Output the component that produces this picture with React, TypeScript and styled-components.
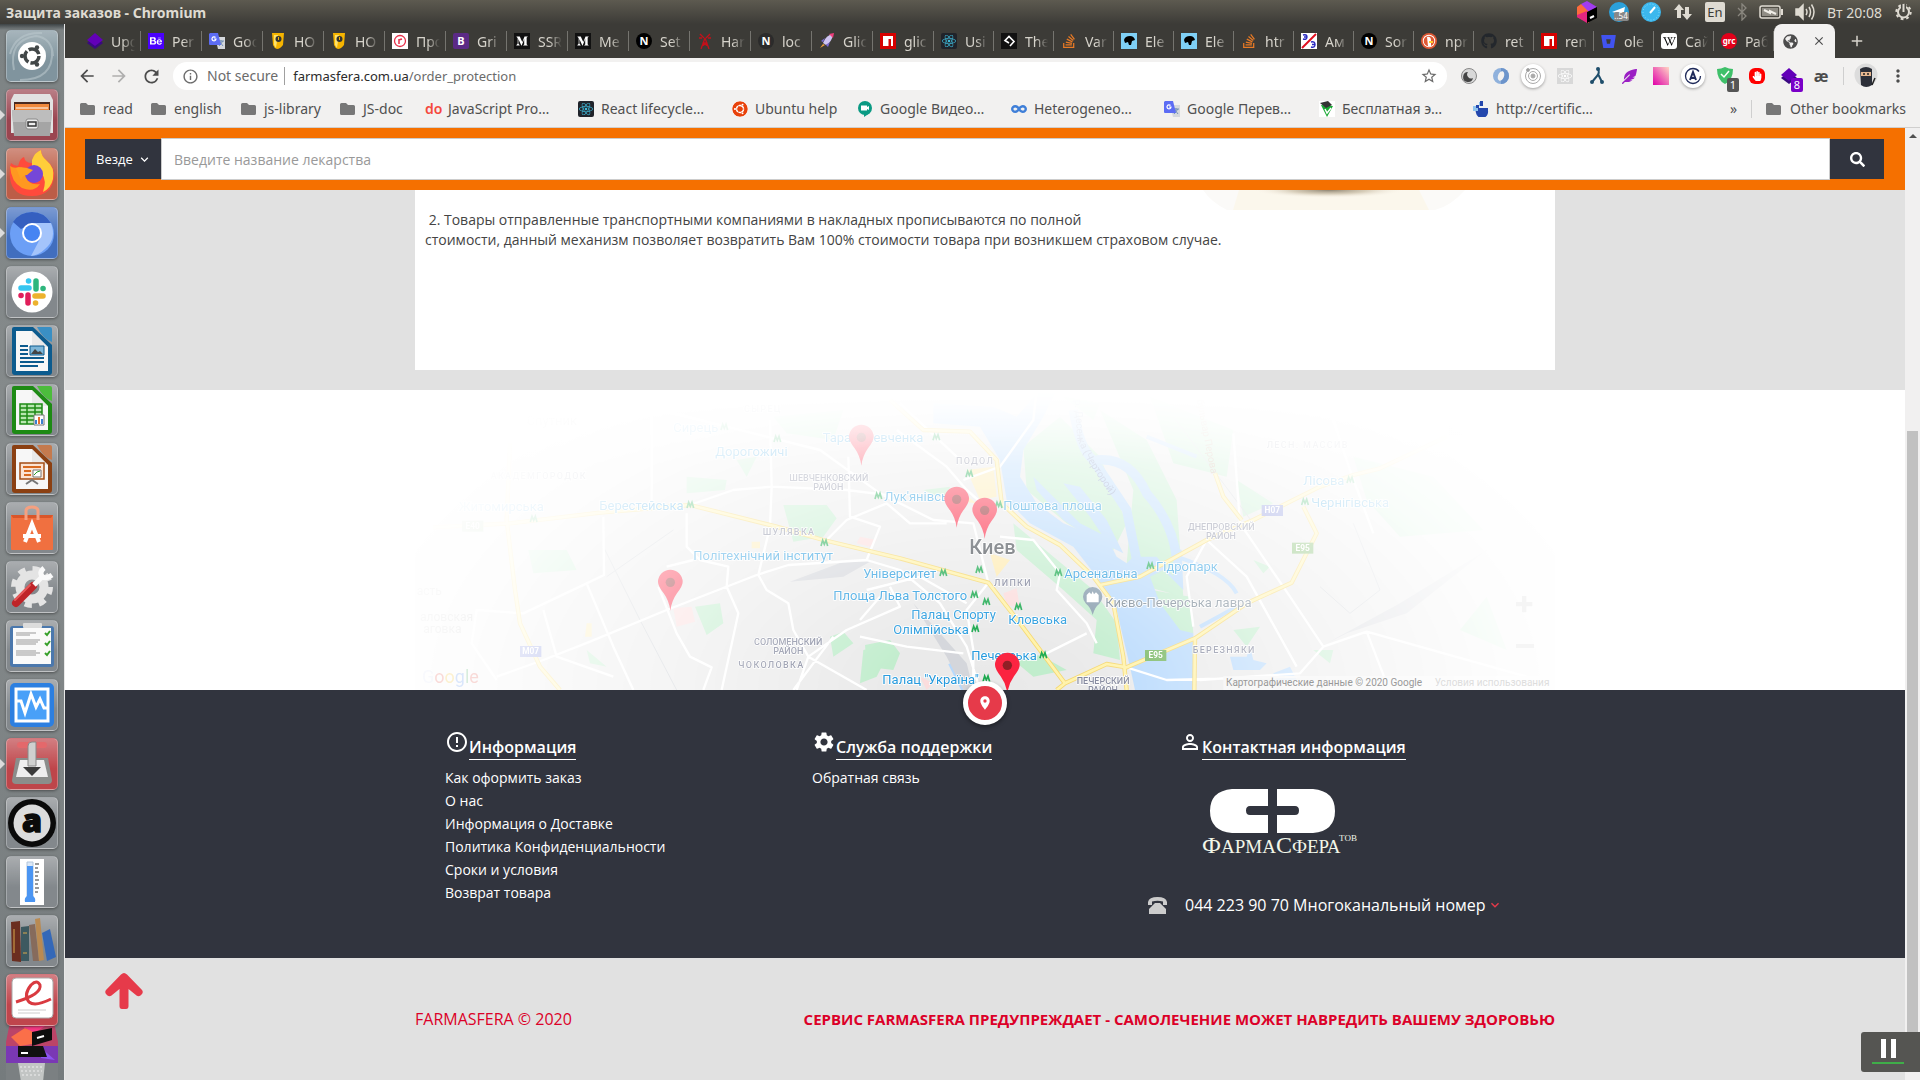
import React from 'react';
import styled, { createGlobalStyle } from 'styled-components';
import {
  FaBehance, FaBitbucket, FaBluetoothB, FaGithub, FaGlobeAmericas, FaMediumM, FaReact,
  FaStackOverflow, FaUbuntu, FaWikipediaW, FaHandPaper, FaFeatherAlt, FaSearch, FaInfinity,
} from 'react-icons/fa';
import {
  MdArrowBack, MdArrowForward, MdRefresh, MdStarBorder, MdInfoOutline, MdMoreVert, MdErrorOutline,
  MdSettings, MdPersonOutline, MdKeyboardArrowDown, MdClose, MdAdd, MdPlace,
} from 'react-icons/md';

const ui = '"Noto Sans", "Open Sans", sans-serif';
const site = '"Open Sans", "Noto Sans", sans-serif';
const dark = '#31343e';
const red = '#e63a4a';

const Global = createGlobalStyle`
  * { box-sizing: border-box; }
  html, body { margin: 0; height: 100%; overflow: hidden; }
  #root { height: 100%; }
  button { border: 0; padding: 0; background: none; font: inherit; color: inherit; cursor: pointer; }
  a { color: inherit; text-decoration: none; }
  svg { display: block; flex: none; }
`;

const Desktop = styled.div`
  display: grid;
  grid-template: 24px minmax(0, 1fr) / 65px minmax(0, 1fr);
  height: 100vh;
  font-family: ${ui};
`;

/* ---------- top panel ---------- */
const Panel = styled.header`
  grid-column: 1 / -1;
  display: flex;
  align-items: center;
  justify-content: space-between;
  padding: 0 8px 0 6px;
  background: linear-gradient(#5d5a50, #3c3b37);
  color: #dfdbd2;
  font-size: 14px;
`;
const WindowTitle = styled.strong`
  font-size: 14px;
`;
const Indicators = styled.div`
  display: flex;
  align-items: center;
  gap: 12px;
  white-space: nowrap;
`;
const Layout = styled.span`
  width: 20px;
  height: 20px;
  border-radius: 2px;
  background: #dfdbd2;
  color: #3c3b37;
  font-size: 13px;
  line-height: 20px;
  text-align: center;
`;
const Clock = styled.time`
  width: 56px;
  font-size: 14px;
`;

/* ---------- launcher ---------- */
const Launcher = styled.nav`
  display: flex;
  flex-direction: column;
  gap: 7px;
  min-height: 0;
  padding: 6px 5px 0 6px;
  overflow: hidden;
  border-right: 1px solid #e8e8e8;
  background: linear-gradient(#3d4345 0, #7d8384 6px, #868b8c 40%, #757b7d 100%);
`;
const Tile = styled.button<{ $bg?: string; $mark?: boolean }>`
  position: relative;
  flex: none;
  width: 52px;
  height: 52px;
  border: 1px solid rgba(255, 255, 255, 0.28);
  border-radius: 5px;
  background: linear-gradient(rgba(255, 255, 255, 0.32), rgba(255, 255, 255, 0.02) 60%), ${p => p.$bg || '#81868a'};
  box-shadow: 0 1px 3px rgba(0, 0, 0, 0.4);
  &::before {
    content: '';
    display: ${p => (p.$mark ? 'block' : 'none')};
    position: absolute;
    left: -7px;
    top: 20px;
    border: 5px solid transparent;
    border-left-color: #dcdcdc;
    border-right-width: 0;
  }
  svg { margin: -1px; }
`;
const Stack = styled.div`
  display: flex;
  flex-direction: column;
  margin-top: -13px;
`;

/* ---------- browser ---------- */
const Browser = styled.div`
  display: flex;
  flex-direction: column;
  min-width: 0;
  min-height: 0;
`;
const TabStrip = styled.div`
  display: flex;
  flex: none;
  height: 34px;
  padding-left: 15px;
  background: #3c3b37;
  color: #d6d3cb;
`;
const TabButton = styled.button`
  display: flex;
  align-items: center;
  gap: 8px;
  flex: 0 1 60px;
  min-width: 0;
  padding: 0 5px 0 7px;
  text-align: left;
  background: linear-gradient(#75746f, #75746f) right center / 1px 20px no-repeat;
  &:nth-child(-n + 14) { flex-basis: 61px; }
`;
const TabText = styled.span`
  flex: 1;
  overflow: hidden;
  white-space: nowrap;
  font-size: 14px;
  mask-image: linear-gradient(90deg, #000 45%, transparent 96%);
`;
const ActiveTab = styled.div`
  display: flex;
  align-items: center;
  justify-content: space-between;
  flex: 0 0 61px;
  padding: 0 9px;
  border-radius: 8px 8px 0 0;
  background: #f2f1f0;
  color: #4c4c4c;
`;
const NewTab = styled.button`
  display: grid;
  place-items: center;
  width: 44px;
`;
const Toolbar = styled.div`
  display: flex;
  align-items: center;
  flex: none;
  height: 36px;
  padding: 0 6px;
  background: #f2f1f0;
  color: #4c4c4c;
`;
const ToolButton = styled.button<{ $dim?: boolean }>`
  display: grid;
  place-items: center;
  flex: none;
  position: relative;
  width: 32px;
  height: 32px;
  opacity: ${p => (p.$dim ? 0.4 : 1)};
`;
const Omnibox = styled.div`
  display: flex;
  align-items: center;
  flex: 1;
  height: 28px;
  margin: 0 6px;
  padding: 0 9px;
  border-radius: 14px;
  background: #fff;
  color: #6b6b6b;
  font-size: 14px;
`;
const Security = styled.span`
  margin-left: 8px;
  padding-right: 6px;
  border-right: 1px solid #a0a0a0;
  line-height: 18px;
  white-space: nowrap;
`;
const Address = styled.div`
  flex: 1;
  margin-left: 8px;
  font-size: 13px;
  b { font-weight: 400; color: #2b2b2b; }
`;
const Disc = styled.span`
  display: grid;
  place-items: center;
  width: 24px;
  height: 24px;
  border-radius: 50%;
  background: #fff;
  box-shadow: 0 1px 3px rgba(0, 0, 0, 0.35);
`;
const Count = styled.span<{ $bg: string }>`
  position: absolute;
  right: 2px;
  bottom: 0;
  width: 12px;
  height: 14px;
  border-radius: 2px;
  background: ${p => p.$bg};
  color: #fff;
  font-size: 11px;
  line-height: 14px;
  text-align: center;
`;
const Divider = styled.i`
  flex: none;
  width: 1px;
  height: 18px;
  margin: 0 6px;
  background: #cfcfcf;
`;
const BookmarkBar = styled.nav`
  display: flex;
  align-items: center;
  flex: none;
  height: 34px;
  padding: 0 14px 4px 15px;
  border-bottom: 1px solid #d0cfce;
  background: #f2f1f0;
  color: #505050;
  font-size: 14px;
`;
const Bookmark = styled.a<{ $w: number }>`
  display: flex;
  align-items: center;
  gap: 7px;
  flex: 0 1 ${p => p.$w}px;
  white-space: nowrap;
`;
const OtherBookmarks = styled.div`
  display: flex;
  align-items: center;
  gap: 8px;
  margin-left: auto;
  white-space: nowrap;
`;
const DoMark = styled.span`
  width: 16px;
  color: #f5483d;
  font-size: 14px;
  font-weight: 600;
`;
const Glyph = styled.span<{ $bg: string; $fg?: string; $round?: number }>`
  display: grid;
  place-items: center;
  flex: none;
  width: 16px;
  height: 16px;
  overflow: hidden;
  border-radius: ${p => p.$round || 0}px;
  background: ${p => p.$bg};
  color: ${p => p.$fg || '#fff'};
  font-size: 11px;
  font-weight: 700;
  line-height: 16px;
`;

/* ---------- web page ---------- */
const Viewport = styled.div`
  display: flex;
  flex: 1;
  min-height: 0;
`;
const Page = styled.div`
  display: flex;
  flex-direction: column;
  flex: 1;
  min-width: 0;
  overflow: hidden;
  background: #e1e1e1;
  font-family: ${site};
`;
const Scrollbar = styled.div`
  display: flex;
  flex-direction: column;
  align-items: center;
  flex: 0 0 15px;
  padding-top: 6px;
  background: #f1f0f0;
`;
const Caret = styled.i<{ $down?: boolean }>`
  border: 4px solid transparent;
  border-top-width: 0;
  border-bottom-color: #505050;
`;
const Thumb = styled.i`
  width: 11px;
  height: 67%;
  margin: auto 0 15px;
  background: #c1c1c1;
`;
const SearchBar = styled.form`
  display: flex;
  align-items: center;
  flex: none;
  padding: 10px 21px 10px 20px;
  background: #f57000;
`;
const Scope = styled.button`
  display: flex;
  align-items: center;
  justify-content: center;
  gap: 4px;
  width: 76px;
  height: 40px;
  padding-left: 2px;
  background: ${dark};
  color: #fff;
  font-size: 13px;
`;
const SearchInput = styled.input`
  flex: 1;
  min-width: 0;
  height: 42px;
  padding: 0 12px;
  border: 1px solid #ccc;
  background: #fff;
  color: #333;
  font: 14px ${site};
  &::placeholder { color: #999; opacity: 1; }
`;
const SearchButton = styled.button`
  display: grid;
  place-items: center;
  width: 54px;
  height: 40px;
  background: ${dark};
  color: #fff;
`;
const Main = styled.main`
  flex: none;
  padding-bottom: 20px;
`;
const Wrap = styled.div`
  width: 100%;
  max-width: 1140px;
  margin: 0 auto;
`;
const Card = styled(Wrap)`
  padding: 0 10px 120px;
  background: #fff;
`;
const Photo = styled.div`
  display: flex;
  justify-content: flex-end;
  height: 20px;
  padding-right: 80px;
`;
const Paragraph = styled.p`
  margin: 0;
  color: #444;
  font-size: 14px;
  line-height: 20px;
`;
const MapBand = styled.section`
  position: relative;
  display: flex;
  justify-content: center;
  flex: none;
  height: 300px;
  background: #fff;
`;
const MapToggle = styled.button`
  position: absolute;
  left: 50%;
  bottom: -35px;
  display: grid;
  place-items: center;
  width: 44px;
  height: 44px;
  transform: translateX(-50%);
  border: 5px solid #fff;
  border-radius: 50%;
  background: ${red};
  color: #fff;
  box-shadow: 0 2px 4px rgba(0, 0, 0, 0.4);
`;
const Footer = styled.footer`
  flex: none;
  background: ${dark};
  color: #fff;
`;
const FooterGrid = styled(Wrap)`
  display: grid;
  grid-template-columns: 367fr 336fr 407fr;
  padding: 38px 0 41px 30px;
`;
const Heading = styled.h3<{ $inset?: boolean }>`
  display: flex;
  align-items: flex-start;
  margin: 0;
  padding-left: ${p => (p.$inset ? 30 : 0)}px;
  font-size: 16px;
  font-weight: 600;
  line-height: 23px;
  white-space: nowrap;
  svg { margin-top: 2px; }
  span { margin-top: 8px; border-bottom: 1px solid #fff; }
`;
const LinkList = styled.ul`
  margin: 6px 0 0;
  padding: 0;
  list-style: none;
  font-size: 14px;
  line-height: 23px;
`;
const LogoBox = styled.div`
  padding: 29px 0 0 54px;
`;
const Phone = styled.div`
  display: flex;
  align-items: center;
  margin-top: 34px;
  font-size: 16px;
  line-height: 24px;
  white-space: nowrap;
  a { margin: 0 1px 0 18px; }
`;
const Bottom = styled.div`
  position: relative;
  flex: 1;
  color: #dc0028;
`;
const BottomRow = styled(Wrap)`
  display: flex;
  align-items: center;
  justify-content: space-between;
  padding-top: 49px;
  font-size: 16px;
  line-height: 24px;
  strong { font-size: 15px; }
`;
const ToTop = styled.button`
  position: absolute;
  left: 40px;
  top: 15px;
`;
const Recorder = styled.button`
  position: fixed;
  right: 0;
  bottom: 8px;
  display: grid;
  place-items: center;
  width: 59px;
  height: 40px;
  padding: 0 6px 2px 0;
  border-radius: 3px 0 0 3px;
  background: #555552;
`;

/* ---------- favicons ---------- */
const NextMark = ({ c = '#000' }: { c?: string }) => <Glyph $bg={c} $round={8}>N</Glyph>;
const NpmMark = () => (
  <svg width="16" height="16"><path fill="#d60000" d="M0 0h16v16H0z" /><path fill="#fff" d="M3 3h10v10h-2V6H8.500v7H3z" /></svg>
);
const Diamonds = () => (
  <svg width="16" height="16"><path fill="#3a0a80" d="M8 3l8 7-8 6-8-6z" /><path fill="#6200b8" d="M8 0l8 7-8 6-8-6z" /></svg>
);
const Translate = () => (
  <svg width="16" height="16"><path fill="#d5d8dd" d="M6 4h10v12H9z" /><path stroke="#7390b5" d="M9 8h6M12 7v2m-2 4 4-5m-3 1 3 4" /><path fill="#5c6cf4" d="M1 0h8l3 12H1a1 1 0 0 1-1-1V1z" /><path fill="none" stroke="#fff" strokeWidth="1.200" d="M6.500 4.500A2 2 0 1 0 7 6H5" /></svg>
);
const Shield = () => (
  <svg width="16" height="16"><path fill="#f5b400" d="M2 0q6-1 12 0l-1 12q-3 4-6 4-3-1-4-4z" /><path fill="#ffe26a" d="M4 2h4L6 15l-2-3z" /><circle cx="8.500" cy="6" r="3" fill="#333" /><path fill="#f5b400" d="M8 4h1v3H8z" /></svg>
);
const Circled = () => (
  <svg width="16" height="16"><path fill="#fff" d="M0 0h16v16H0z" /><circle cx="8" cy="8" r="5.500" fill="none" stroke="#e8304a" strokeWidth="1.300" /><path fill="none" stroke="#e8304a" strokeWidth="1.500" d="M7 11V6q0 1 3 0" /></svg>
);
const Tower = () => (
  <svg width="16" height="16" fill="none" stroke="#c3101a" strokeWidth="1.300"><path d="M8 5 4 16M8 5l4 11M5.500 10h5M4.500 13.500 10 10M11.500 13.500 6 10M3 1l4 4M13 1 9 5M2 5h3M11 5h3" /></svg>
);
const Rocket = () => (
  <svg width="16" height="16"><path fill="#cfc4f2" d="M14 1q-7 1-10 9l3 2q6-3 7-11z" /><path fill="#ef3e7c" d="M15 0l-5 1 4 4z" /><path fill="#7b6ad8" d="M6 5 2 8l2 1zM11 9l-2 5-2-2z" /><path fill="#f2a13c" d="M4 11l-3 4 5-3z" /></svg>
);
const ReactBox = () => <Glyph $bg="#20232a" $fg="#3fb9d8" $round={2}><FaReact size={14} /></Glyph>;
const Pointer = () => (
  <svg width="16" height="16"><path fill="#111" d="M0 0h16v16H0z" /><path fill="none" stroke="#fff" strokeWidth="1.600" d="M8 10 4 7.500 8 3.500l5 5L9 13" /></svg>
);
const Elephant = () => (
  <svg width="16" height="16"><path fill="#7fd0f6" d="M0 0h16v16H0z" /><path d="M3 7q1-4 6-4 4 0 5 4l-3 1-1 4H8l-1-3-3 1z" /></svg>
);
const Nines = () => (
  <svg width="16" height="16"><path fill="#fff" d="M0 0h16v16H0z" /><path fill="none" stroke="#2a2ac0" strokeWidth="1.400" d="M2 2q4-1 4 2t-4 2m1-2h3M10 9q4-1 4 2.500t-4 2.500m1-2.500h3" /><path stroke="#e01020" strokeWidth="2" d="M15 1 1 15" /></svg>
);
const Duck = () => (
  <svg width="16" height="16"><circle cx="8" cy="8" r="8" fill="#de5833" /><circle cx="8" cy="8" r="6.200" fill="#fff" /><circle cx="8" cy="8" r="5.300" fill="#de5833" /><path fill="#fff" d="M6 4q4-1 4 4v5H7z" /><path fill="#fc3" d="M8 8h4v2H8z" /></svg>
);

const tabs: [string, React.ReactNode][] = [
  ['Upg', <Diamonds />], ['Per', <Glyph $bg="#4b00ff"><FaBehance size={12} /></Glyph>], ['Goo', <Translate />],
  ['HO', <Shield />], ['HO', <Shield />], ['Про', <Circled />], ['Gri', <Glyph $bg="#5b2a86" $round={2}>B</Glyph>],
  ['SSR', <Glyph $bg="#111"><FaMediumM size={12} /></Glyph>], ['Me', <Glyph $bg="#111"><FaMediumM size={12} /></Glyph>],
  ['Set', <NextMark />], ['Har', <Tower />], ['loc', <NextMark c="#2b2b2b" />], ['Glic', <Rocket />], ['glic', <NpmMark />],
  ['Usi', <ReactBox />], ['The', <Pointer />], ['Var', <FaStackOverflow size={16} color="#e87a25" />],
  ['Ele', <Elephant />], ['Ele', <Elephant />], ['htr', <FaStackOverflow size={16} color="#e87a25" />],
  ['Ам', <Nines />], ['Sor', <NextMark />], ['npr', <Duck />], ['ret', <FaGithub size={16} color="#23272c" />],
  ['ren', <NpmMark />], ['ole', <FaBitbucket size={15} color="#4153f0" />],
  ['Сай', <Glyph $bg="#fff" $fg="#000" $round={3}><FaWikipediaW size={13} /></Glyph>],
  ['Раб', <svg width="16" height="16"><circle cx="8" cy="8" r="8" fill="#e2001a" /><text x="8" y="11" fill="#fff" fontSize="8" fontWeight="700" textAnchor="middle">grc</text></svg>],
];

const Folder = () => (
  <svg width="16" height="16" fill="#777"><path d="M0 3.500A1.500 1.500 0 0 1 1.500 2H6l2 2h5.500A1.500 1.500 0 0 1 15 5.500v7a1.500 1.500 0 0 1-1.500 1.500h-12A1.500 1.500 0 0 1 0 12.500z" /></svg>
);
const bookmarks: [string, number, React.ReactNode][] = [
  ['read', 71, <Folder />], ['english', 90, <Folder />], ['js-library', 99, <Folder />], ['JS-doc', 85, <Folder />],
  ['JavaScript Pro…', 153, <DoMark>do</DoMark>], ['React lifecycle…', 154, <ReactBox />],
  ['Ubuntu help', 125, <Glyph $bg="#fff" $fg="#e8420b" $round={8}><FaUbuntu size={16} /></Glyph>],
  ['Google Видео…', 154, <svg width="16" height="16"><circle cx="8" cy="7" r="7" fill="#0a9a83" /><path fill="#0a9a83" d="M7 11v5l6-4z" /><path fill="#fff" d="M4 4.500h6V6l2-1v4l-2-1v1.500H4z" /></svg>],
  ['Heterogeneo…', 153, <FaInfinity size={16} color="#3f7fd8" />], ['Google Перев…', 155, <Translate />],
  ['Бесплатная э…', 154, <svg width="16" height="16"><path fill="#fff" d="M0 0h16v16H0z" /><path fill="#18a833" d="M2 4l12 1-6 11z" /><path fill="#333" d="M1 2l8-2 4 4-6 3z" /><path stroke="#fff" strokeWidth="1.500" d="m6 8 2 4 4-5" fill="none" /></svg>],
  ['http://certific…', 154, <svg width="16" height="16"><path fill="#2447ad" d="M2 7h13v3a6 6 0 0 1-12 2z" /><path fill="#8fc3ee" d="M0 5h5v5H0zM6 1h4v4H6z" /><path fill="#2447ad" d="M7 0h3v5H7zM3 4h3v3H3z" /></svg>],
];

/* ---------- launcher drawings, each on a 52 × 52 grid ---------- */
const Art = ({ children }: { children: React.ReactNode }) => <svg width="52" height="52" viewBox="0 0 52 52">{children}</svg>;
const Doc = ({ c, d, children }: { c: string; d: string; children: React.ReactNode }) => (
  <Art>
    <path fill={d} d="M6 4q0-2 2-2h19l19 18v27q0 3-3 3H9q-3 0-3-3z" />
    <path fill={c} d="M31 2h13q2 0 2 2v13q-8-2-15-15z" />
    <path fill="#f7f7f7" d="M10 6h16l16 16v24H10z" />
    <path fill="#dcdcdc" d="M26 6v16h16z" opacity=".5" />
    {children}
  </Art>
);
const SlackMark = () => (
  <Art>
    <circle cx="26" cy="26" r="20.500" fill="#fff" />
    <g strokeWidth="5.500" strokeLinecap="round">
      <path stroke="#36c5f0" d="M15 22h8M22.500 15h.1" /><path stroke="#2eb67d" d="M30 15v8M37 22.500h.1" />
      <path stroke="#ecb22e" d="M29 30h8M29.500 37h.1" /><path stroke="#e01e5a" d="M22 29v8M15 29.500h.1" />
    </g>
  </Art>
);
const apps: { label: string; bg?: string; mark?: boolean; art: React.ReactNode }[] = [
  { label: 'Search your computer', bg: '#7d929c', art: <Art><path fill="none" stroke="#b9c6cc" strokeWidth="2" d="M8 40Q2 10 30 6q16 2 17 20M14 50q34 0 32-30M4 24Q10 2 36 3" opacity=".6" /><circle cx="26" cy="26" r="14" fill="#fff" /><circle cx="26" cy="26" r="7" fill="none" stroke="#424748" strokeWidth="3.500" strokeDasharray="12.500 2.160" /><g fill="#424748"><circle cx="16" cy="26" r="2.200" /><circle cx="31" cy="17.500" r="2.200" /><circle cx="31" cy="34.500" r="2.200" /></g></Art> },
  { label: 'Files', bg: '#98414d', mark: true, art: <Art><path fill="#e2e2e2" d="M8 5h36l3 6v33H5V11z" /><path fill="#4a2a20" d="M8 13h36v10H8z" /><path fill="#f0893c" d="M9 15h34v7H9z" /><path stroke="#fff" d="M10 19h32" /><path fill="#a5a5a5" d="M6 21h40l-2 26H8z" /><path fill="#bdbdbd" d="M6 21h40l-1 12H7z" /><rect x="20" y="30" width="12" height="10" rx="2" fill="#eee" stroke="#888" /><path fill="#eee" stroke="#333" strokeWidth="1.500" d="M22 33h8v4h-8z" /></Art> },
  { label: 'Firefox', bg: '#bb5a43', mark: true, art: <Art><path fill="#ff4a3c" d="M5 15q3 3 7 3 2-8 6-9 1 6 8 6Q28 5 35 2q0 6 6 11 8 6 7 16-2 19-22 19T4 30Q3 20 5 15z" /><path fill="#ffce3a" d="M26 12q3-8 9-10 0 6 6 11 8 6 6 18-2 9-10 13 4-12-1-18-4-6-10-6z" /><path fill="#ff9820" d="M4 18q4 3 9 1l12 3-5 6q2 10 14 8-6 9-18 4Q5 34 4 18z" /><circle cx="28" cy="26" r="9" fill="#7547d8" /><path fill="#ffa21f" d="M10 20q8-2 17 2l-6 5q-5 0-6 5z" /></Art> },
  { label: 'Chromium', bg: '#3d6bbd', mark: true, art: <Art><circle cx="26" cy="27" r="22" fill="#6c9ff6" /><path fill="#355fc0" d="M7 15Q14 5 26 5t19 11H26l-11 6z" /><path fill="#a4c4fb" d="M26 16h19q6 16-6 26-6 6-14 7l9-17z" /><circle cx="26" cy="26" r="10" fill="#fff" /><circle cx="26" cy="26" r="8" fill="#4684f2" /></Art> },
  { label: 'Slack', art: <SlackMark /> },
  { label: 'LibreOffice Writer', art: <Doc c="#3a8fc4" d="#0c5b8e"><path stroke="#0c5b8e" strokeWidth="2" d="M14 21h8M14 25h8M14 29h8M14 33h24M14 37h24M14 41h18" /><path fill="#7db6d8" stroke="#0c5b8e" d="M24 21h14v9H24z" /><path fill="#444" d="m25 29 4-5 3 3 2-1 3 3z" /></Doc> },
  { label: 'LibreOffice Calc', art: <Doc c="#4cbc3c" d="#1d8a14"><path fill="#b8e6b0" stroke="#1d8a14" strokeWidth="1.500" d="M14 20h22v20H14zM14 24h22M14 28h22M14 32h22M14 36h22M21 20v20M29 20v20" /><path fill="#fff" stroke="#777" d="M28 31h10v10H28z" /><path stroke="#e87030" strokeWidth="2" d="M33 40v-7" /><path stroke="#3a7fd0" strokeWidth="2" d="M30 40v-4M36 40v-5" /></Doc> },
  { label: 'LibreOffice Impress', art: <Doc c="#c47a4e" d="#8b4012"><path fill="#fbe4d4" stroke="#a44c14" strokeWidth="1.500" d="M14 20h24v16H14z" /><path stroke="#d86a20" strokeWidth="2" d="M17 24h18M18 28h7M18 32h7" /><path fill="#fff" stroke="#777" d="M27 27h8v7h-8z" /><path stroke="#2a9a2a" fill="none" d="m28 32 3-3 3-1" /><path stroke="#777" strokeWidth="2" d="m20 41 6-4 6 4" fill="none" /></Doc> },
  { label: 'Ubuntu Software', art: <Art><path fill="#f07040" d="M5 13h42v34q0 1-1 1H6q-1 0-1-1z" /><path fill="#d9562a" d="M5 13h42l-2 3H7z" /><path fill="none" stroke="#f5a080" strokeWidth="3" d="M20 18V9q0-4 6-4t6 4v9" /><path fill="none" stroke="#fff" strokeWidth="4" d="m19 40 7-18 7 18" /><path stroke="#fff" strokeWidth="4" d="M17 34h18" /></Art> },
  { label: 'System Settings', art: <Art><circle cx="26" cy="26" r="12" fill="none" stroke="#e4e4e4" strokeWidth="9" /><circle cx="26" cy="26" r="18" fill="none" stroke="#e4e4e4" strokeWidth="6" strokeDasharray="7.100 7.030" /><path stroke="#bf2428" strokeWidth="8" strokeLinecap="round" d="m10 42 17-17" /><path stroke="#e65a5a" strokeWidth="2" strokeLinecap="round" d="m9 39 15-15" /><path stroke="#fafafa" strokeWidth="5" d="m28 24 9-9" /><path fill="none" stroke="#fafafa" strokeWidth="5" d="M38 7q-5 4-2 8t10-1" /></Art> },
  { label: 'To Do', art: <Art><rect x="4" y="6" width="44" height="41" rx="3" fill="#4b78ad" /><path fill="#fafafa" d="M7 8h38v36H7z" /><rect x="17" y="3" width="19" height="5" rx="1" fill="#dcdcdc" /><path stroke="#999" d="M10 13h20M10 15h14M10 20h24M10 22h22M10 24h20M10 31h20M10 33h24M10 35h20" /><path fill="none" stroke="#37a02b" strokeWidth="2" d="m39 13 2 2 3-4M39 23l2 2 3-4M39 33l2 2 3-4" /></Art> },
  { label: 'System Monitor', art: <Art><rect x="4" y="4" width="44" height="44" rx="5" fill="#2d7fe0" /><path fill="#49a0f8" stroke="#fff" strokeWidth="3" d="M10 10h32v32H10z" /><path fill="none" stroke="#fff" strokeWidth="3" d="M10 22h5l4 12 6-19 5 13 4-8 4 9h4" /></Art> },
  { label: 'Package Installer', bg: '#bd4146', mark: true, art: <Art><rect x="11" y="4" width="30" height="6" rx="3" fill="#e4686b" /><path fill="#8b8d8b" d="m10 20-4 22q0 4 4 4h32q4 0 4-4l-4-22z" /><path fill="#eee" d="m14 22-4 17h32l-4-17z" /><path fill="#cfd0cf" stroke="#888" d="M22 28V8q0-4 4-4h4v24z" /><path fill="#3a3a3a" d="M17 29h18l-9 9z" /></Art> },
  { label: 'Anki', art: <Art><circle cx="26" cy="26" r="24" fill="#0a0a0a" /><circle cx="26" cy="26" r="18.500" fill="#dcdcdc" /><text x="26" y="35" textAnchor="middle" fontSize="32" fontWeight="900" fill="#0a0a0a" stroke="#0a0a0a" strokeWidth="1.500">a</text></Art> },
  { label: 'Thermometer', art: <Art><path fill="#fff" d="M14 3h24v46H14z" /><path fill="#dce9f8" stroke="#b4c6da" d="M21 6h6v36h-6z" /><path fill="#4b95f2" d="M21 10h6v30q3 2 2 6H19q-1-4 2-6z" /><path stroke="#333" d="M29 8h4M29 12h3M29 16h4M29 20h3M29 24h4M29 28h3M29 32h4M29 36h3" /></Art> },
  { label: 'Calibre', art: <Art><path fill="#6b2e20" d="m5 7 9-1 1 41-9-1z" /><path fill="#3d5960" d="m15 12 8-1v35h-8z" /><path fill="#866b5c" d="m23 10 6-1 4 37h-6z" /><path fill="#b98a52" d="m29 4 5-1 4 42-5 1z" /><path fill="#3468b8" d="m36 18 8-4 6 28-9 4z" /><path stroke="#d9a94c" d="M8 14v24M17 18h4M17 38h4" /></Art> },
  { label: 'PDF Reader', bg: '#be4148', art: <Art><rect x="6" y="4" width="41" height="40" rx="4" fill="#fff" stroke="#aaa" /><path fill="none" stroke="#d93a40" strokeWidth="3" d="M10 28q26-8 24-17-3-6-9 0-8 10-2 17 6 5 22-3" /><path stroke="#ccc" d="M12 36h28M12 39h22" /></Art> },
];

const FoldedTiles = () => (
  <Stack>
    <svg width="52" height="62" viewBox="0 0 52 62">
      <path fill="#bc4468" d="M4 2h44l5 25H-1z" />
      <path fill="#fb6f49" d="m5 17 14-9 9 3-2 13-12 2z" /><path fill="#f83985" d="m17 7 22-1-10 7z" />
      <path fill="#0d0d0d" d="m26 12 20-4v12l-20 6z" /><path stroke="#fff" strokeWidth="2" d="m31 18 7-2" />
      <path fill="#7a38b4" d="M0 26h52l3 18H-3z" /><path fill="#8b55f0" d="m34 27 15 13-14-2z" /><path fill="#111" d="M12 26h25l4 11H12z" /><path stroke="#fff" strokeWidth="2" d="M15 33h7" />
      <path fill="#7b8082" d="M-2 43h56v19H-2z" /><path fill="#c2c5c4" d="M12 43h27l-2 19H15z" /><path stroke="#eee" strokeDasharray="2 2" d="M14 47h23M15 51h21M16 55h19" />
    </svg>
  </Stack>
);

/* ---------- city map ---------- */
const metro = '#1f97dc';
const labels: [string, number, number][] = [
  ['Сирець', 820, 125], ['Дорогожичі', 946, 197], ['Тарас Шевченка', 1268, 155], ['Житомирська', 176, 364],
  ['Берестейська', 598, 359], ['Лук\'янівська', 1453, 332], ['Поштова площа', 1810, 359], ['Політехнічний інститут', 880, 509],
  ['Університет', 1390, 563], ['Площа Льва Толстого', 1300, 629], ['Палац Спорту', 1534, 686], ['Кловська', 1825, 701],
  ['Олімпійська', 1480, 731], ['Печерська', 1714, 809], ['Палац "Україна"', 1447, 881], ['Арсенальна', 1993, 563],
  ['Гідропарк', 2268, 542], ['Лісова', 2710, 284], ['Чернігівська', 2734, 350],
];
const districts: [string, number, number, boolean?][] = [
  ['СЫРЕЦ', 1032, 66], ['АКАДЕМГОРОДОК', 272, 267], ['ШУЛЯВКА', 1088, 435], ['ЧОКОЛОВКА', 1015, 834], ['ПОДОЛ', 1668, 221],
  ['ЛИПКИ', 1782, 587], ['БЕРЕЗНЯКИ', 2378, 789], ['ЛЕСН. МАССИВ', 2600, 174],
  ['ШЕВЧЕНКОВСКИЙ', 1168, 272, true], ['РАЙОН', 1240, 300, true], ['СОЛОМЕНСКИЙ', 1062, 765, true], ['РАЙОН', 1120, 792, true],
  ['ДНЕПРОВСКИЙ', 2364, 420, true], ['РАЙОН', 2418, 446, true], ['ПЕЧЕРСКИЙ', 2030, 882, true], ['РАЙОН', 2064, 908, true],
];
const stations = [[972, 111], [1131, 147], [400, 387], [870, 345], [1272, 459], [1434, 318], [1608, 142], [1707, 252], [1795, 345], [1629, 549], [1737, 540], [1722, 615], [1758, 636], [1854, 651], [1725, 717], [1929, 796], [1758, 866], [1974, 549], [2250, 528], [2850, 270], [2714, 336]];
const pins = [[811, 662], [1384, 227], [1670, 413], [1754, 446], [1822, 911]];
const shields: [string, number, number, string][] = [['E40', 186, 392, '#78a86a'], ['M07', 360, 768, '#6f7fd8'], ['H07', 2585, 345, '#7682d6'], ['E95', 2676, 458, '#72b45c'], ['E95', 2235, 780, '#72b45c'], ['E95', 3147, 102, '#b0b0a0']];

const yellowRoads = 'M100 412 330 400 600 368 870 345 1130 410 1270 450 1500 505 1765 578 1860 700 1995 880 2120 822 2180 832 2385 745 2540 640 2675 578 2750 430 2710 350M1470 30 1570 120 1710 125 1790 210 1805 340 1880 410 1980 465 2080 560 2140 640 2170 800 2180 900M2100 585 2220 560 2420 450 2560 390 2760 290 2860 255 2940 235 3140 140M2445 250 2470 320 2525 390M2385 745 2383 900M330 160 320 390 345 600 360 700 420 830 480 900M1995 880 1970 900';
const whiteRoads = 'M290 860 430 810 570 755 800 660 1070 555 1165 525 1400 510 1500 540 1620 640 1700 770 1740 900M560 580 640 770 700 900M775 590 830 730 870 800 935 832 910 900M610 380 612 555 560 580 370 670 230 660 215 760 290 870M1110 90 1115 290 1110 410 1075 555 1100 600 1165 640 1180 720 1225 800 1190 900M870 345 1000 300 1115 290 1340 300 1500 320M860 370 860 470 900 510 985 530 980 590 1015 670 965 900M780 60 980 110 1260 180 1440 310 1600 390 1720 400 1765 578M1225 800 1340 720 1500 650 1470 590M1225 800 1400 900M1280 450 1340 390 1460 340 1530 400 1640 400M1345 200 1350 380 1440 410 1400 510M1910 0 1900 90 1800 230 1690 270M1490 120 1640 230 1700 300 1780 370M755 60 755 330M430 660 470 800 640 860M800 530 880 510M1765 578 1700 660 1720 780 1720 900M1400 600 1560 560 1700 640M1800 440 1900 450 1980 550 1970 600 2060 700 2090 760M1920 800 2060 730M1380 740 1520 770 1690 790M2380 710 2360 560 2420 450 2540 560 2690 830M2500 130 2520 400 2670 620 2770 770 2700 850 2400 870M2770 770 2900 725 3380 860M2900 725 2960 880M2790 60 2850 240 2920 430M1500 40 1670 200M1380 690 1440 620M1180 900 1300 740M2180 832 2300 870 2700 860';

const CityMap = () => (
  <svg width="1140" height="300" viewBox="45 0 3420 900" fontFamily='Roboto, "Noto Sans", sans-serif' role="img" aria-label="Карта">
    <defs>
      <radialGradient id="fade" gradientUnits="userSpaceOnUse" cx="0" cy="0" r="1.350" gradientTransform="translate(1755 900) scale(1480 850)">
        <stop offset="0" stopColor="#fff" /><stop offset=".15" stopColor="#fff" stopOpacity=".95" />
        <stop offset=".3" stopColor="#fff" stopOpacity=".72" /><stop offset=".48" stopColor="#fff" stopOpacity=".46" />
        <stop offset=".66" stopColor="#fff" stopOpacity=".25" /><stop offset=".78" stopColor="#fff" stopOpacity=".1" />
        <stop offset=".9" stopColor="#fff" stopOpacity=".03" /><stop offset="1" stopColor="#fff" stopOpacity="0" />
      </radialGradient>
      <linearGradient id="topFade" x1="0" y1="0" x2="0" y2="1">
        <stop offset="0" stopOpacity="1" /><stop offset=".1" stopOpacity=".5" /><stop offset=".25" stopOpacity="0" />
      </linearGradient>
      <mask id="mapFade" maskUnits="userSpaceOnUse" x="45" y="0" width="3420" height="900">
        <path fill="url(#fade)" d="M45 0h3420v900H45z" />
        <path fill="url(#topFade)" d="M45 0h3420v900H45z" />
      </mask>
    </defs>
    <g mask="url(#mapFade)">
      <path fill="#e9e9e9" d="M45 0h3420v900H45z" />
      <g fill="#bfeccb">
        <path d="M1150 345 1280 345 1310 385 1270 440 1180 455zM885 650 960 640 970 700 920 735zM1395 765 1470 750 1500 790 1480 840 1400 830zM1290 740 1330 725 1360 760 1300 800zM860 260 980 270 975 300 860 310zM385 480 500 480 530 540 400 550zM1120 80 1330 60 1300 150 1160 130zM1010 210 1070 200 1040 260zM1570 300 1650 290 1640 330zM1840 400 2080 600 2150 700 2160 810 2080 790 2090 690 1990 600 1850 480z" />
        <path d="M1870 170 1980 80 2100 200 2180 400 2140 480 2000 400 1880 300zM2100 60 2240 150 2330 330 2350 620 2240 590 2180 520 2200 300zM2200 590 2370 620 2380 730 2290 720zM2250 20 2500 120 2480 260 2320 220zM1390 780 1480 760 1430 860 1380 880zM1840 810 1920 795 2000 840 1900 860zM2510 270 2620 340 2530 380zM2860 200 3100 260 3250 420 3000 440 2900 330zM3180 720 3260 620 3320 780zM2740 780 2800 780 2790 820zM2560 510 2610 530 2590 550zM2500 720 2580 710 2540 770zM560 780 620 830 570 820zM1990 20 2100 40 2080 90z" />
      </g>
      <g fill="#b5d8fc">
        <path d="M1600 40 1780 50 1850 80 1920 0 1970 0 1930 80 1870 180 1860 260 1910 340 1990 400 2090 440 2150 500 2180 520 2200 500 2270 500 2320 560 2320 470 2345 480 2350 600 2290 540 2250 560 2280 640 2340 720 2380 730 2385 900 2205 900 2190 830 2150 660 2090 560 2020 470 1890 400 1820 330 1800 210 1740 110 1600 100z" />
        <path d="m1900 260 60 60 80 80 80 40 30 60-70-50-90-60-80-90zM1990 280l50 10 80 100 50 100-40-20-60-90z" />
        <path d="M2490 800h50l10-30 10 40 40 10-20 20h-80zM2620 850l50-20 20 40h-60z" />
      </g>
      <path fill="none" stroke="#b5d8fc" strokeWidth="28" d="M2020 60q20 120 60 150l100 150 30 150M2090 210q100-10 150 100 80 90 90 200" />
      <path fill="none" stroke="#b5d8fc" strokeWidth="12" d="M2330 500q150 50 180 110M2400 710l110-60M2240 140l150 60M1650 820l40 80" />
      <path fill="#d3d5da" d="M1170 575 1330 515 1410 515 1330 560zM1540 640 1700 820 1720 900 1690 900 1640 800zM2780 760 3000 640 3260 480 3020 670 2840 730z" />
      <g fill="#fbdcdc"><path d="M820 655 875 650 885 695 830 710zM1380 440l50 10-20 20-40-10zM1810 610l40-15 10 60-40-10zM1560 860l40 20-20 20z" /></g>
      <path fill="#fdeab0" d="M1700 240 1780 230 1790 320 1740 330zM1770 490 1830 510 1790 560zM1055 455h25v20h-25zM560 700h15v40h-20zM1630 330l60-20 40 30z" />
      <path fill="none" stroke="#cdd1d6" strokeWidth="3" d="M610 470 720 690 830 900M820 420 620 560M2320 80 2560 400M2860 400 2940 600 2850 670 2760 590" />
      <path fill="none" stroke="#fff" strokeWidth="7" strokeLinejoin="round" d={whiteRoads} />
      <path fill="none" stroke="#f5d66a" strokeWidth="13" strokeLinejoin="round" d={yellowRoads} />
      <path fill="none" stroke="#fff2a8" strokeWidth="8" strokeLinejoin="round" d={yellowRoads} />
      {stations.map(([x, y]) => <path key={`${x}-${y}`} fill="none" stroke="#18a84c" strokeWidth="5" d={`M${x - 9} ${y + 9}l5-17 5 12 5-12 5 17`} />)}
      <g fontSize="39" fill={metro} stroke="#fff" strokeWidth="5" paintOrder="stroke">
        {labels.map(([t, x, y]) => <text key={t} x={x} y={y}>{t}</text>)}
      </g>
      <g fill="#7d8298" fontWeight="500" stroke="#fff" strokeWidth="4" paintOrder="stroke">
        {districts.map(([t, x, y, tight]) => <text key={`${t}${x}`} x={x} y={y} fontSize="27" letterSpacing={tight ? 0 : 4}>{t}</text>)}
      </g>
      <g fontSize="30" fill="#8b9dc4">
        <path id="river" fill="none" d="M2024 30 2032 150 2062 210 2140 330" /><text><textPath href="#river">р. Десенка (Черторой)</textPath></text>
        <text fill="#c3a58c" transform="translate(2390 30) rotate(79)">бульвар Перова</text>
      </g>
      <text x="1708" y="491" fontSize="60" fontWeight="500" fill="#454b51" stroke="#fff" strokeWidth="5" paintOrder="stroke">Киев</text>
      <path fill="#8096a8" d="M2078 675q-6-24-20-34a29 29 0 1 1 40 0q-14 10-20 34z" /><path fill="#fff" d="M2060 615l8-8 6 6 4-9 4 9 6-6 8 8v22h-36z" />
      <text x="2116" y="650" fontSize="39" fill="#70808e" stroke="#fff" strokeWidth="5" paintOrder="stroke">Києво-Печерська лавра</text>
      {shields.map(([t, x, y, c]) => (
        <g key={`${t}${x}`}><path fill={c} d={`M${x} ${y}h64v33h-64z`} /><text x={x + 32} y={y + 25} fontSize="25" fontWeight="700" fill="#fff" textAnchor="middle">{t}</text></g>
      ))}
      <g fontSize="39" fill="#222"><text x="128" y="106">Карта</text><text x="380" y="106">Спутник</text></g>
      <g fontSize="36" fill="#888"><text x="50" y="615">асть</text><text x="60" y="692">аловская</text><text x="70" y="730">аговка</text></g>
      {pins.map(([x, y]) => (
        <g key={x} transform={`translate(${x} ${y})`}><path fill="#fb1f3c" d="M0 0q-4-30-20-52-17-22-17-34a37 37 0 0 1 74 0q0 12-17 34Q4-30 0 0z" /><circle cy="-85" r="14" fill="#8d1a20" /></g>
      ))}
      <path fill="#f4f4f4" opacity=".8" d="M2470 858h980v42h-980z" />
    </g>
    <text x="66" y="878" fontSize="54" opacity=".18"><tspan fill="#aab8f0" fillOpacity=".4">G</tspan><tspan fill="#ea4335">o</tspan><tspan fill="#fbbc05">o</tspan><tspan fill="#4285f4">g</tspan><tspan fill="#34a853">l</tspan><tspan fill="#ea4335">e</tspan></text>
    <g fontSize="30"><text x="2478" y="887" fill="#999">Картографические данные © 2020 Google</text><text x="3104" y="887" fill="#ddd">Условия использования</text></g>
    <path fill="#f5f5f5" d="M3348 636h18v-18h13v18h18v13h-18v18h-13v-18h-18zM3348 762h54v12h-54z" />
  </svg>
);

const Logo = () => (
  <svg width="156" height="70" viewBox="0 0 156 70" fill="#fff" role="img" aria-label="ФармаСфера">
    <path d="M30 0h36v17H48q-4 0-4 4.500t4 4.500h18v18H30Q8 42 8 22T30 0zM75 0h36q22 2 22 22t-22 22H75V26h18q4 0 4-4.500T93 17H75z" />
    <g fontFamily='"Liberation Serif", serif' fill="#f2f6e8"><text y="64" fontSize="19"><tspan fontSize="24">Ф</tspan>АРМА<tspan fontSize="24">С</tspan>ФЕРА</text><text x="137" y="52" fontSize="9">ТОВ</text></g>
  </svg>
);

const infoLinks = ['Как оформить заказ', 'О нас', 'Информация о Доставке', 'Политика Конфиденциальности', 'Сроки и условия', 'Возврат товара'];

export default function App() {
  return (
    <Desktop>
      <Global />
      <Panel>
        <WindowTitle>Защита заказов - Chromium</WindowTitle>
        <Indicators>
          <svg width="20" height="22"><path fill="#a13cf0" d="m4 3 6-3 10 6-10 6z" /><path fill="#fc6b3c" d="m0 6 4-3 8 8v11L0 16z" /><path fill="#e32581" d="m0 14 10-4v12L0 16z" /><path fill="#000" d="m10 11 10-5v11l-10 5z" /><path stroke="#fff" strokeWidth="2" d="m13 17 4-2" /></svg>
          <svg width="20" height="20"><circle cx="10" cy="10" r="10" fill="#2ba0da" /><path fill="#fff" d="m3 10 13-5-2 10-4-3-2 2v-3z" /><rect x="5" y="10" width="15" height="9" rx="2" fill="#888" /><text x="12" y="17" fill="#fff" fontSize="8" textAnchor="middle">..54</text></svg>
          <svg width="20" height="20"><circle cx="10" cy="10" r="10" fill="#3cb8ee" /><circle cx="10" cy="10" r="8" fill="none" stroke="#8fdcfb" strokeDasharray="1 2" /><path stroke="#fff" strokeWidth="2" d="m9 11 5-6" /></svg>
          <svg width="20" height="20" fill="#dfdbd2"><path d="M6 2l5 6H8v8H4V8H1zM14 18l5-6h-3V5h-4v7H9z" /></svg>
          <Layout>En</Layout>
          <svg width="10" height="18" fill="none" stroke="#8a877f" strokeWidth="1.300"><path d="m1 5 8 8-4 4V1l4 4-8 8" /></svg>
          <svg width="24" height="16"><rect x="1" y="2" width="20" height="12" rx="2" fill="none" stroke="#dfdbd2" strokeWidth="1.500" /><path fill="#8f8c84" d="M3 4h16v8H3z" /><path fill="#dfdbd2" d="M22 5h2v6h-2z" /><path stroke="#f0eee8" strokeWidth="2" fill="none" d="m5 6 6 3v-2l6 3" /></svg>
          <svg width="20" height="18" fill="none" stroke="#dfdbd2" strokeWidth="1.500"><path fill="#dfdbd2" d="M1 6h3l4-4v14l-4-4H1z" /><path d="M11 6q2 3 0 6M14 4q3 5 0 10M16.500 1.500q5 7.500 0 15" /></svg>
          <Clock>Вт 20:08</Clock>
          <svg width="17" height="18" fill="none" stroke="#dfdbd2"><circle cx="8.500" cy="9" r="5.500" strokeWidth="2" /><circle cx="8.500" cy="9" r="7.200" strokeWidth="2" strokeDasharray="2.800 2.850" /><path stroke="#4a4943" strokeWidth="5" d="M8.500 1v6" /><path strokeWidth="2" d="M8.500 1v8" /></svg>
        </Indicators>
      </Panel>

      <Launcher>
        {apps.map(a => <Tile key={a.label} aria-label={a.label} $bg={a.bg} $mark={a.mark}>{a.art}</Tile>)}
        <FoldedTiles />
      </Launcher>

      <Browser>
        <TabStrip>
          {tabs.map(([text, icon], i) => <TabButton key={i}>{icon}<TabText>{text}</TabText></TabButton>)}
          <ActiveTab><FaGlobeAmericas size={15} /><button aria-label="Close tab"><MdClose size={14} /></button></ActiveTab>
          <NewTab aria-label="New tab"><MdAdd size={18} /></NewTab>
        </TabStrip>

        <Toolbar>
          <ToolButton aria-label="Back"><MdArrowBack size={20} /></ToolButton>
          <ToolButton aria-label="Forward" $dim><MdArrowForward size={20} /></ToolButton>
          <ToolButton aria-label="Reload"><MdRefresh size={21} /></ToolButton>
          <Omnibox>
            <MdInfoOutline size={17} />
            <Security>Not secure</Security>
            <Address><b>farmasfera.com.ua</b>/order_protection</Address>
            <MdStarBorder size={18} />
          </Omnibox>
          <ToolButton aria-label="Dark mode"><svg width="16" height="16"><circle cx="8" cy="8" r="7.500" fill="#d8d8d8" stroke="#888" /><path fill="#444" d="M7 4a5 5 0 1 0 5 6 4 4 0 0 1-5-6z" /></svg></ToolButton>
          <ToolButton aria-label="Sync"><svg width="16" height="16"><circle cx="8" cy="8" r="8" fill="#8fb1dc" /><path fill="#6c94cb" d="M8 0a8 8 0 0 1 0 16z" /><ellipse cx="8" cy="8" rx="3" ry="5" fill="#f2f1f0" transform="rotate(20 8 8)" /></svg></ToolButton>
          <ToolButton aria-label="Orbit"><Disc><svg width="18" height="18" fill="none" stroke="#aaa"><circle cx="9" cy="9" r="7.500" /><circle cx="9" cy="9" r="4.500" /><circle cx="9" cy="9" r="2" fill="#aaa" /><circle cx="4" cy="3" r="1.500" fill="#999" /></svg></Disc></ToolButton>
          <ToolButton aria-label="React tools"><Glyph $bg="#d8d8d8"><FaReact size={14} /></Glyph></ToolButton>
          <ToolButton aria-label="Lambda"><svg width="16" height="18" fill="none" stroke="#1f4e6b" strokeWidth="2"><path d="M9 1q2 5-1 8l-5 6M9 7l4 8" /><circle cx="9" cy="2" r="1" /><circle cx="3" cy="15" r="1" /><circle cx="13" cy="15" r="1" /></svg></ToolButton>
          <ToolButton aria-label="Feather"><FaFeatherAlt size={15} color="#9b1fc4" /></ToolButton>
          <ToolButton aria-label="Gradient"><svg width="16" height="18"><defs><linearGradient id="pk" x1="0" y1="1" x2="1" y2="0"><stop stopColor="#e000a8" /><stop offset="1" stopColor="#ffd5c4" /></linearGradient></defs><path fill="url(#pk)" d="M0 0h16v18H0z" /></svg></ToolButton>
          <ToolButton aria-label="Apollo"><Disc><svg width="18" height="18"><circle cx="9" cy="9" r="7.500" fill="none" stroke="#1f2a5a" strokeWidth="1.300" strokeDasharray="42 5" /><path fill="none" stroke="#1f2a5a" strokeWidth="2" d="M6 13 9 5l3 8M7 11h4" /></svg></Disc></ToolButton>
          <ToolButton aria-label="Guard"><svg width="18" height="20"><path fill="#3fc06a" d="M1 3q4 0 8-2 4 2 8 2 0 11-8 15Q1 14 1 3z" /><path fill="none" stroke="#fff" strokeWidth="1.500" d="m5 8 3 3 5-6" /></svg><Count $bg="#555">1</Count></ToolButton>
          <ToolButton aria-label="Block"><Glyph $bg="#f00" $round={6}><FaHandPaper size={10} /></Glyph></ToolButton>
          <ToolButton aria-label="Layers"><Diamonds /><Count $bg="#7a00c8">8</Count></ToolButton>
          <ToolButton aria-label="Ligature"><strong>æ</strong></ToolButton>
          <Divider />
          <ToolButton aria-label="Profile"><svg width="24" height="26"><circle cx="12" cy="12" r="11.500" fill="#dcdcdc" /><path fill="#2c2f38" d="M6 6q6-4 12 0v16q-6 4-11 0z" /><path fill="#e8b890" d="M7 9h10v4H7z" /><path stroke="#222" strokeWidth="1.500" d="M9 11h2M13 11h2M18 22l3-7" /></svg></ToolButton>
          <ToolButton aria-label="Menu"><MdMoreVert size={20} /></ToolButton>
        </Toolbar>

        <BookmarkBar>
          {bookmarks.map(([text, w, icon]) => <Bookmark key={text} href="#" $w={w}>{icon}{text}</Bookmark>)}
          <OtherBookmarks>»<Divider /><Folder /><a href="#">Other bookmarks</a></OtherBookmarks>
        </BookmarkBar>

        <Viewport>
          <Page>
            <SearchBar>
              <Scope type="button">Везде<MdKeyboardArrowDown size={15} /></Scope>
              <SearchInput aria-label="Поиск" placeholder="Введите название лекарства" />
              <SearchButton type="button" aria-label="Найти"><FaSearch size={15} /></SearchButton>
            </SearchBar>
            <Main>
              <Card>
                <Photo>
                  <svg width="262" height="20">
                    <defs><radialGradient id="sh"><stop stopColor="#8f8572" /><stop offset=".5" stopColor="#cfc4ae" stopOpacity=".8" /><stop offset="1" stopColor="#fcf6ec" stopOpacity="0" /></radialGradient></defs>
                    <path fill="#fbfaf8" d="M0 0h262q-14 16-30 20H24Q8 12 0 0z" /><path fill="#fbf7ec" d="M36 0h180l10 20H30z" /><ellipse cx="126" cy="0" rx="76" ry="8" fill="url(#sh)" />
                  </svg>
                </Photo>
                <Paragraph>
                  &nbsp;2. Товары отправленные транспортными компаниями в накладных прописываются по полной<br />
                  стоимости, данный механизм позволяет возвратить Вам 100% стоимости товара при возникшем страховом случае.
                </Paragraph>
              </Card>
            </Main>
            <MapBand>
              <CityMap />
              <MapToggle aria-label="Показать карту"><MdPlace size={16} /></MapToggle>
            </MapBand>
            <Footer>
              <FooterGrid>
                <div>
                  <Heading><MdErrorOutline size={24} /><span>Информация</span></Heading>
                  <LinkList>{infoLinks.map(t => <li key={t}><a href="#">{t}</a></li>)}</LinkList>
                </div>
                <div>
                  <Heading><MdSettings size={24} /><span>Служба поддержки</span></Heading>
                  <LinkList><li><a href="#">Обратная связь</a></li></LinkList>
                </div>
                <div>
                  <Heading $inset><MdPersonOutline size={24} /><span>Контактная информация</span></Heading>
                  <LogoBox><Logo /></LogoBox>
                  <Phone>
                    <svg width="19" height="17" fill="#ccc"><path d="M0 5Q1 0 9.500 0T19 5v3h-4V4.500q-5.500-1.500-11 0V8H0z" /><path d="M7 6h5l6 6v5H1v-5z" /></svg>
                    <a href="tel:0442239070">044 223 90 70 Многоканальный номер</a>
                    <MdKeyboardArrowDown size={16} color={red} />
                  </Phone>
                </div>
              </FooterGrid>
            </Footer>
            <Bottom>
              <ToTop aria-label="Наверх"><svg width="38" height="36"><path fill={red} d="M19 0q1.500 0 3 1.500L37 17q1.500 2 0 4l-1.500 1.500q-2 1.500-4 0L23.500 16v17q0 3-2.500 3h-4q-2.500 0-2.500-3V16l-8 6.500q-2 1.500-4 0L1 21q-1.500-2 0-4L16 1.500Q17.500 0 19 0z" /></svg></ToTop>
              <BottomRow><span>FARMASFERA © 2020</span><strong>СЕРВИС FARMASFERA ПРЕДУПРЕЖДАЕТ - САМОЛЕЧЕНИЕ МОЖЕТ НАВРЕДИТЬ ВАШЕМУ ЗДОРОВЬЮ</strong></BottomRow>
            </Bottom>
          </Page>
          <Scrollbar><Caret /><Thumb /></Scrollbar>
        </Viewport>
      </Browser>

      <Recorder aria-label="Pause"><svg width="34" height="30"><path fill="#fff" d="M10 3h5v19h-5zM20 3h5v19h-5z" /><path fill="#3fae49" d="M1 26h32v2H1z" /></svg></Recorder>
    </Desktop>
  );
}
